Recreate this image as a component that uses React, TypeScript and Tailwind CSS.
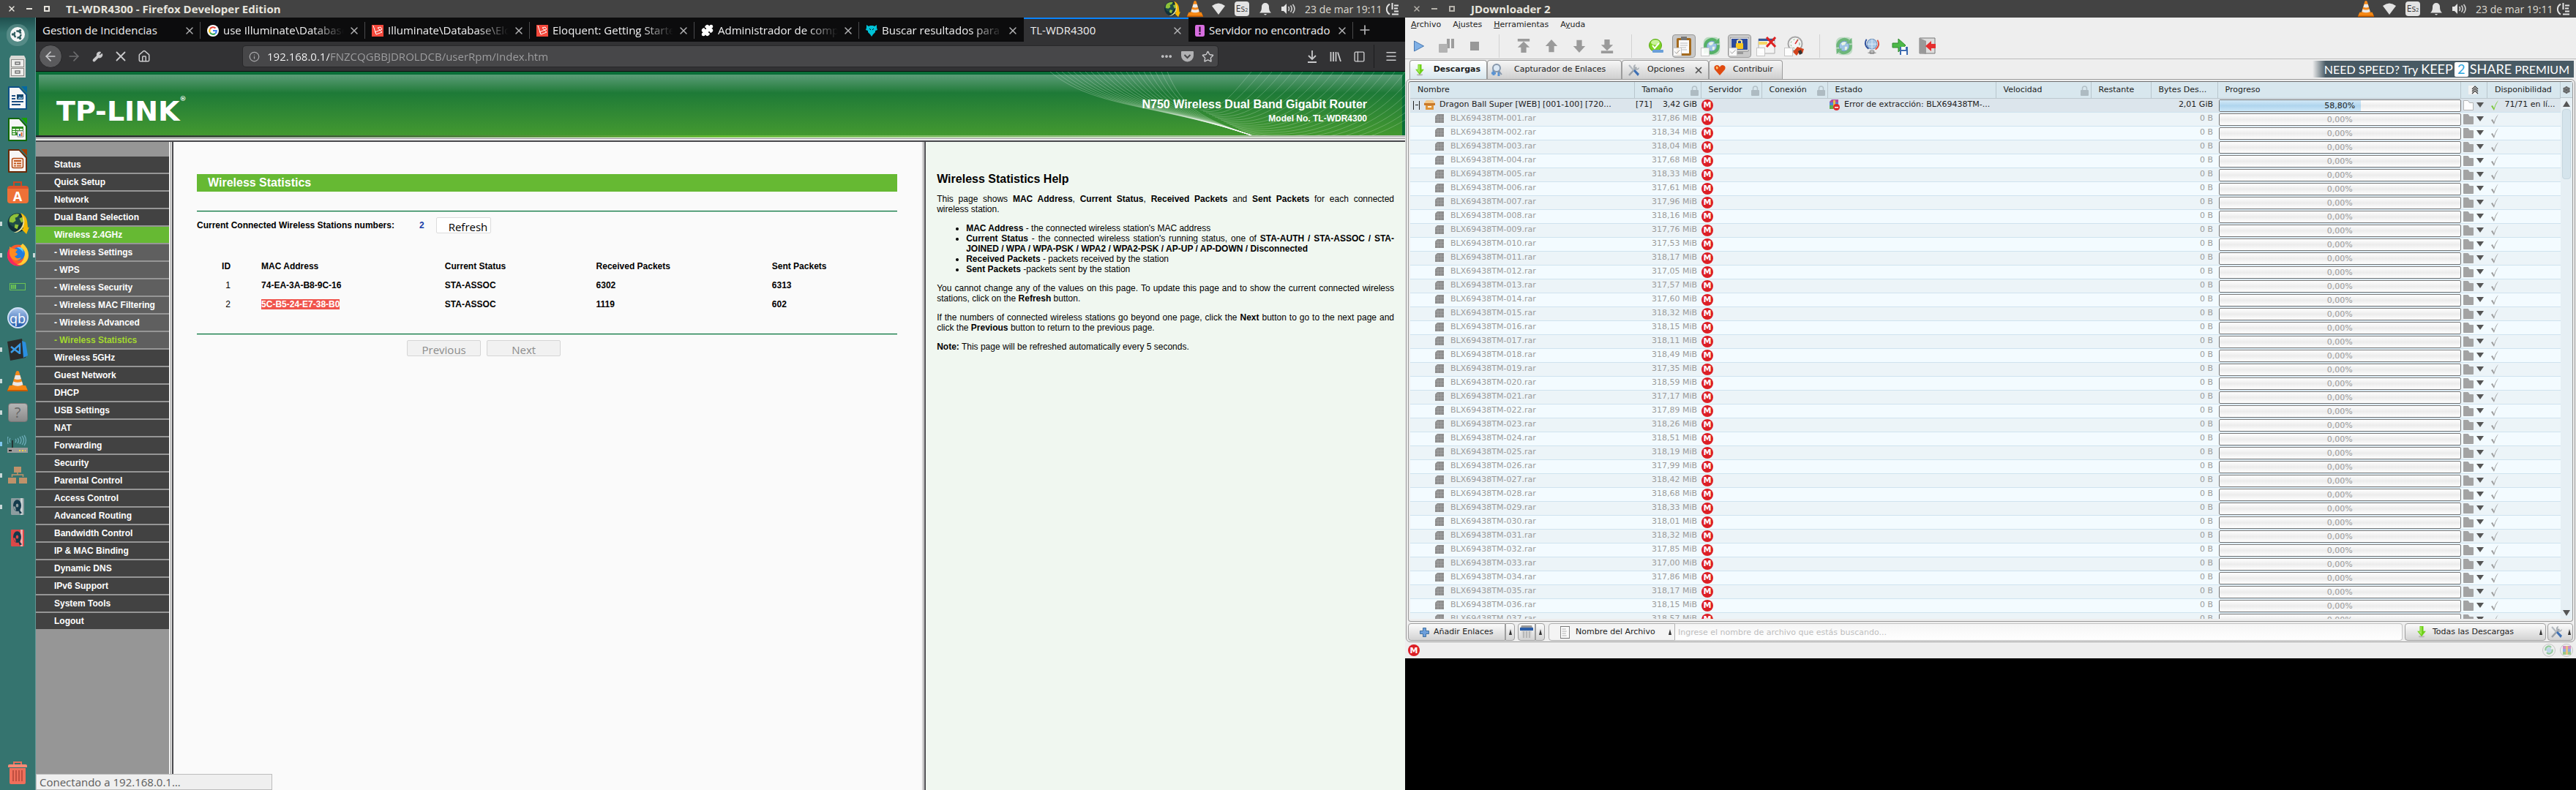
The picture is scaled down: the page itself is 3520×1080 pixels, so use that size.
import type { ReactNode } from 'react';
import {
  ArrowLeft, ArrowRight, Wrench, X, House, Info, Ellipsis, Star, Download, Plus, Menu, Settings, PanelLeft, Puzzle, Check,
} from 'lucide-react';

const UI = 'font-["Open_Sans",sans-serif]';
const ARIAL = 'font-["Liberation_Sans",sans-serif]';
const DEJA = 'font-["DejaVu_Sans",sans-serif]';

/* ---------- shared icons ---------- */

function Vlc({ size }: { size: number }) {
  return (
    <svg width={size} height={size} viewBox="0 0 28 28" aria-hidden="true">
      <path d="M3 20h22l3 7H0z" fill="#f68712" />
      <path d="M0 26h28v2H0z" fill="#c65c00" />
      <path d="M12 1q2-2 4 0l6 20q-8 5-16 0z" fill="#f58a1c" />
      <path d="M11 6h6.400l1.500 5q-4.500 2-9.400 0zM8.200 14.500q5.800 2.500 11.800 0l1.300 4.500q-7 3.500-14.400 0z" fill="#e9e9e9" />
    </svg>
  );
}

function JdLogo({ size }: { size: number }) {
  return (
    <svg width={size} height={size} viewBox="0 0 32 32" aria-hidden="true">
      <circle cx="15" cy="15" r="13.500" fill="#123038" />
      <circle cx="12" cy="12" r="9" fill="#1f4c48" />
      <path d="M6 6q6-5 12-3l-3 4-3 1 1 4-4 3-5-1q-1-4 2-8zM12 17l5 1-2 6-4-2zM18 9l4-2 3 5-4 3z" fill="#8fc23a" />
      <path d="M20 1q8 4 9 12l1 9 2-1-4 10-8-8 3 1q2-12-3-23z" fill="#f5b800" />
      <path d="M22 3q5 8 2 17-4 9-14 9 9-3 12-10 3-8 0-16z" fill="#e8e19c" />
    </svg>
  );
}

function Tray({ jd }: { jd?: boolean }) {
  return (
    <div className="flex items-center pr-2 text-[#dfdbd2]">
      {jd && <span className="flex w-8 justify-center"><JdLogo size={23} /></span>}
      <span className="flex w-8 justify-center"><Vlc size={22} /></span>
      <span className="flex w-8 justify-center">
        <svg width="18" height="16" viewBox="0 0 18 16" aria-hidden="true"><path d="M0 4q9-7 18 0L9 16z" fill="#e3e3e3" /></svg>
      </span>
      <span className="flex w-8 justify-center">
        <span className="flex h-5 w-5 items-center justify-center rounded-sm bg-[#e3e3e3] text-[12px] leading-5 text-[#333]">
          Es<sub className="text-[7px]">2</sub>
        </span>
      </span>
      <span className="flex w-8 justify-center">
        <svg width="16" height="17" viewBox="0 0 16 17" aria-hidden="true">
          <path d="M8 0a5 5 0 0 1 5 5c0 5 1 6.500 3 8.500H0C2 11.500 3 10 3 5a5 5 0 0 1 5-5zM6 15h4q-2 3-4 0z" fill="#e3e3e3" />
        </svg>
      </span>
      <span className="flex w-8 justify-center">
        <svg width="21" height="16" viewBox="0 0 21 16" fill="none" stroke="#cfcfcf" strokeWidth="1.600" aria-hidden="true">
          <path d="M0 5h3l4-4v14l-4-4H0z" fill="#e3e3e3" stroke="none" />
          <path d="M9.500 5q2 3 0 6M12.500 3.500q3.500 4.500 0 9M15.500 2q5 6 0 12" />
        </svg>
      </span>
      <span className="ml-1.5 w-[106px] whitespace-nowrap text-[14px]">23 de mar 19:11</span>
      <svg width="19" height="19" viewBox="0 0 19 19" fill="none" stroke="#e3e3e3" strokeWidth="2" className="ml-1" aria-hidden="true">
        <path d="M6 2.500a8 8 0 0 0 0 14M9.500 1v9M12 4.500h6M12 8.500h5M12 12.500h6M9 16.500h9" />
      </svg>
    </div>
  );
}

function Panel({ title, active, jd }: { title: string; active?: boolean; jd?: boolean }) {
  return (
    <header className={`${UI} flex h-6 shrink-0 items-center justify-between bg-[#434343]`}>
      <div className={active ? 'flex items-center text-[#e6e3dc]' : 'flex items-center text-[#b5b2ab]'}>
        <div className="flex w-[90px] items-center gap-3 pl-2.5">
          <button aria-label="Cerrar" className="flex h-3 w-3 items-center justify-center"><X size={12} strokeWidth={3} /></button>
          <button aria-label="Minimizar" className="flex h-3 w-3 items-center justify-center"><span className="h-0.5 w-2 bg-current" /></button>
          <button aria-label="Maximizar" className="flex h-3 w-3 items-center justify-center"><span className="h-2 w-2 border-2 border-current" /></button>
        </div>
        <h1 className="text-[15px] leading-6 font-bold text-[#e8e5de]">{title}</h1>
      </div>
      <Tray jd={jd} />
    </header>
  );
}

/* ---------- launcher ---------- */

function Doc({ color, dark, children }: { color: string; dark: string; children: ReactNode }) {
  return (
    <svg width="26" height="32" viewBox="0 0 26 32" aria-hidden="true">
      <path d="M0 1q0-1 1-1h14l11 11v20q0 1-1 1H1q-1 0-1-1z" fill={dark} />
      <path d="M2 2h13l9 10v18H2z" fill="#f6f6f6" />
      <path d="M18 0h8v9z" fill={color} />
      {children}
    </svg>
  );
}

function Disk({ color }: { color: string }) {
  return (
    <svg width="18" height="23" viewBox="0 0 18 16" preserveAspectRatio="none" aria-hidden="true">
      <rect width="18" height="16" rx="1" fill={color} />
      <path d="M13 0h3v16h-3z" fill="#fff" opacity=".55" />
      <circle cx="8.500" cy="7" r="5.500" fill="#143a4c" />
      <circle cx="8.500" cy="7" r="1.800" fill={color} />
      <path d="M8 8l7 6-3 1z" fill="#143a4c" />
      <path d="M3 8l3 0 1 4q-3-1-4-4z" fill={color} />
    </svg>
  );
}

const launcher: { name: string; dot?: string; icon: ReactNode }[] = [
  {
    name: 'Inicio',
    icon: (
      <svg width="32" height="32" viewBox="0 0 32 32" aria-hidden="true">
        <rect x="1" y="1" width="30" height="30" rx="14" fill="#6b9b98" opacity=".6" />
        <circle cx="16" cy="15" r="10" fill="#f4f6f6" />
        <circle cx="16" cy="15" r="4.500" fill="none" stroke="#2f5d5f" strokeWidth="2.500" strokeDasharray="7.500 2" />
        <g fill="#2f5d5f"><circle cx="9.500" cy="15" r="1.700" /><circle cx="19.500" cy="9.500" r="1.700" /><circle cx="19.500" cy="20.500" r="1.700" /></g>
      </svg>
    ),
  },
  {
    name: 'Archivos',
    icon: (
      <svg width="22" height="30" viewBox="0 0 22 30" aria-hidden="true">
        <path d="M2 0h18l2 4v26H0V4z" fill="#d9d9d6" />
        <g fill="#eeeeec" stroke="#8b8b88"><rect x="2.500" y="5.500" width="17" height="10" /><rect x="2.500" y="17.500" width="17" height="10" /></g>
        <g fill="none" stroke="#777" strokeWidth="1.500"><path d="M8 9v3h6V9z" /><path d="M8 21v3h6v-3z" /></g>
      </svg>
    ),
  },
  {
    name: 'Writer',
    icon: <Doc color="#0369a3" dark="#0d5087"><path d="M5 12h5v2H5zM5 16h5v2H5zM5 20h16v2H5zM5 24h12v2H5z" fill="#1d4f82" /><path d="M12 11h9v7h-9z" fill="#17486e" /><path d="M13 17l3-3 2 2 2-2v3z" fill="#8fc2e6" /></Doc>,
  },
  {
    name: 'Calc',
    icon: <Doc color="#18a303" dark="#106802"><path d="M5 12h16v12H5z" fill="#2c8a1d" /><path d="M6 15h4v2H6zM11 15h4v2h-4zM16 15h4v2h-4zM6 18h4v2H6zM11 18h4v2h-4zM6 21h4v2H6z" fill="#dff3da" /><path d="M13 18h8v8h-8z" fill="#fff" stroke="#888" /><path d="M15 22h2v3h-2z" fill="#2a76c6" /><path d="M17.500 20h2v5h-2z" fill="#e0662c" /></Doc>,
  },
  {
    name: 'Impress',
    icon: <Doc color="#a33e03" dark="#6b2a06"><rect x="5.500" y="12.500" width="15" height="13" rx="2" fill="#fbe9df" stroke="#b24a13" strokeWidth="1.500" /><path d="M8 15h10v2H8zM8 18.500h3v2H8zM12 18.500h6v2h-6zM8 22h3v1.500H8zM12 22h6v1.500h-6z" fill="#c2571b" /></Doc>,
  },
  {
    name: 'Software de Ubuntu',
    icon: (
      <span className="flex h-[30px] w-[30px] flex-col items-center">
        <span className="h-1.5 w-3 border-2 border-b-0 border-[#cf4622]" />
        <span className="flex h-6 w-[29px] items-center justify-center rounded-sm border-t-4 border-[#d9532b] bg-[#ee7137] text-[18px] leading-none font-bold text-white">A</span>
      </span>
    ),
  },
  { name: 'JDownloader', dot: 'bg-[#c9d8d8]', icon: <JdLogo size={31} /> },
  {
    name: 'Firefox',
    dot: 'bg-[#c9d8d8]',
    icon: (
      <svg width="31" height="31" viewBox="0 0 31 31" aria-hidden="true">
        <circle cx="15.500" cy="16" r="14.500" fill="#ff5a2c" />
        <path d="M30 16A14.500 14.500 0 0 1 8 28q14 2 16-10L19 3l3-3q8 6 8 16z" fill="#ffcf35" />
        <path d="M1 16a14.500 14.500 0 0 0 19 13.800Q6 28 5 12L3 7q-2 4-2 9z" fill="#f5295f" />
        <circle cx="16" cy="14" r="9" fill="#1f7de0" />
        <path d="M4 4q3 3 6 3l5 1-3 4 3 2q-1 3-4 3 2 5 9 2-2 4-8 4-7-2-8-9z" fill="#ff8a1f" />
        <path d="M14 5q5-1 8 2l1 6q-2-5-9-8z" fill="#5fd0ff" />
      </svg>
    ),
  },
  {
    name: 'Monitor de batería',
    icon: (
      <svg width="22" height="10" viewBox="0 0 22 10" aria-hidden="true">
        <rect x=".5" y=".5" width="21" height="9" fill="none" stroke="#6cc254" />
        <path d="M2 2h2v6H2zM4.500 2h2v6h-2zM7 2h2v6H7z" fill="#6cc254" />
      </svg>
    ),
  },
  {
    name: 'qBittorrent',
    icon: <span className="flex h-[29px] w-[29px] items-center justify-center rounded-full border-2 border-[#cfe0f5] bg-linear-to-b from-[#a9c4ea] to-[#1e57a8] text-[18px] leading-none text-white">qb</span>,
  },
  {
    name: 'Visual Studio Code',
    dot: 'bg-[#c9d8d8]',
    icon: (
      <svg width="28" height="30" viewBox="0 0 28 30" aria-hidden="true">
        <path d="M0 4l20-4 5 26-21 4z" fill="#2b2b2b" />
        <path d="M20 3l5 2 3 18-6 3z" fill="#2a8fe0" />
        <path d="M5 11l12 9M5 19L17 8v13" stroke="#3a9be8" strokeWidth="2.500" fill="none" />
      </svg>
    ),
  },
  { name: 'VLC', dot: 'bg-[#c9d8d8]', icon: <Vlc size={28} /> },
  {
    name: 'Desconocido',
    dot: 'bg-[#c9d8d8]',
    icon: <span className="flex h-[26px] w-[27px] items-center justify-center rounded-sm border border-[#777] bg-linear-to-b from-[#b5b5b5] to-[#8a8a8a] text-[20px] leading-none text-[#666]">?</span>,
  },
  {
    name: 'Router',
    dot: 'bg-[#7fc6ee]',
    icon: (
      <svg width="28" height="26" viewBox="0 0 28 26" aria-hidden="true">
        <path d="M0 18h28v7H0z" fill="#9b9b9b" /><path d="M2 21h4v2H2z" fill="#222" /><path d="M16 21h2v2h-2zM20 21h2v2h-2zM24 21h1v2h-1z" fill="#f0dc3c" />
        <path d="M7 8v10" stroke="#222" strokeWidth="1.500" />
        <path d="M4 5q-2 3 0 6M1 3q-2 5 0 10M11 6q2 2 0 5M14 5q3 3 0 7M17 3q4 5 0 10M20 2q5 6 0 12M23 1q5 7 0 14" fill="none" stroke="#6aa9b5" strokeWidth="1.400" />
      </svg>
    ),
  },
  {
    name: 'Red',
    dot: 'bg-[#c9d8d8]',
    icon: (
      <svg width="26" height="24" viewBox="0 0 26 24" fill="#c0926a" aria-hidden="true">
        <path d="M8 0h10v8H8zM0 15h11v8H0zM15 15h11v8H15z" /><path d="M13 8v3M5.500 14v-3h15v3" fill="none" stroke="#c0926a" strokeWidth="1.500" />
      </svg>
    ),
  },
  { name: 'Disco', dot: 'bg-[#c9d8d8]', icon: <Disk color="#8d9da0" /> },
  { name: 'Disco rojo', icon: <Disk color="#dd4848" /> },
];

function Launcher() {
  return (
    <nav aria-label="Lanzador" className={`${UI} flex w-[49px] shrink-0 flex-col border-r border-[#5f9694] bg-[#35746f] bg-linear-to-b from-[#1f4f4e] to-[#35746f] to-2% pt-0.5`}>
      {launcher.map((l) => (
        <button key={l.name} aria-label={l.name} className="flex h-[43px] shrink-0 items-center">
          <span className={`h-1.5 w-[3px] shrink-0 ${l.dot ?? ''}`} />
          <span className="flex flex-1 justify-center">{l.icon}</span>
          <span className={l.name === 'Firefox' ? 'h-1.5 w-[3px] shrink-0 bg-[#c9d8d8]' : 'w-[3px]'} />
        </button>
      ))}
      <button aria-label="Papelera" className="mt-auto flex h-12 items-center justify-center">
        <svg width="26" height="31" viewBox="0 0 26 31" aria-hidden="true">
          <path d="M8 4V1h10v3" fill="none" stroke="#e8705c" strokeWidth="2" /><path d="M0 6q0-2 2-2h22q2 0 2 2v2H0z" fill="#fb8a76" />
          <path d="M2 9h22v20q0 2-2 2H4q-2 0-2-2z" fill="#ef6f5b" /><path d="M7 12v15M11 12v15M15 12v15M19 12v15" stroke="#b14437" strokeWidth="1.500" />
        </svg>
      </button>
    </nav>
  );
}

/* ---------- browser ---------- */

function Laravel() {
  return (
    <svg width="16" height="16" viewBox="0 0 16 16" aria-hidden="true">
      <rect width="16" height="16" fill="#f4493c" />
      <path d="M2 1l4 12 8-3-6-6 4-1 2 3-10 4" fill="none" stroke="#fff" strokeWidth="1" />
    </svg>
  );
}

const tabs: { title: string; icon?: ReactNode; active?: boolean }[] = [
  { title: 'Gestion de Incidencias' },
  {
    title: 'use Illuminate\\Database\\Eloquent',
    icon: (
      <span className="flex h-4 w-4 items-center justify-center rounded-full bg-white">
        <svg width="12" height="12" viewBox="0 0 12 12" fill="none" strokeWidth="2.200" aria-hidden="true">
          <path d="M9.500 2.500A5 5 0 0 0 2 3.500" stroke="#ea4335" /><path d="M2 3.500a5 5 0 0 0 0 5" stroke="#fbbc05" />
          <path d="M2 8.500a5 5 0 0 0 7 1.500" stroke="#34a853" /><path d="M9 10a5 5 0 0 0 1.800-4H6" stroke="#4285f4" />
        </svg>
      </span>
    ),
  },
  { title: 'Illuminate\\Database\\Eloquent', icon: <Laravel /> },
  { title: 'Eloquent: Getting Started', icon: <Laravel /> },
  { title: 'Administrador de complementos', icon: <Puzzle size={17} fill="#fff" stroke="#fff" /> },
  {
    title: 'Buscar resultados para "',
    icon: <svg width="16" height="16" viewBox="0 0 16 16" aria-hidden="true"><path d="M1 0l3 2 2-1h4l2 1 3-2v4l1 3-3 1v2l-3 3-2 3-2-3-3-3V8L0 7l1-3z" fill="#00c2d7" /><path d="M5 5l2 2M11 5L9 7" stroke="#0c0c0d" /></svg>,
  },
  { title: 'TL-WDR4300', active: true },
  {
    title: 'Servidor no encontrado',
    icon: <svg width="13" height="16" viewBox="0 0 13 13" preserveAspectRatio="none" aria-hidden="true"><rect width="13" height="13" rx="2" fill="#d76ee0" /><path d="M5.500 2h2v6h-2zM5.500 9h2v2h-2z" fill="#1b0d1d" /></svg>,
  },
];

function BrowserTabs() {
  return (
    <div role="tablist" className="flex h-[33px] bg-[#0c0c0d] text-[15px] text-[#f0f0f1]">
      {tabs.map((t, i) => (
        <div
          key={i}
          className={t.active ? 'flex w-[225px] min-w-0 border-t-2 border-[#0a84ff] bg-[#323234]' : 'flex w-[225px] min-w-0 border-t-2 border-transparent'}
        >
          <button role="tab" aria-selected={!!t.active} className="flex min-w-0 flex-1 items-center gap-1.5 overflow-hidden pl-[9px] text-left">
            {t.icon && <span className="shrink-0">{t.icon}</span>}
            <span className={t.title.length > 22 ? 'min-w-0 flex-1 overflow-hidden mask-r-from-75% whitespace-nowrap' : 'min-w-0 flex-1 whitespace-nowrap'}>{t.title}</span>
          </button>
          <button aria-label="Cerrar pestaña" className="flex w-7 shrink-0 items-center justify-center text-[#b5b5b7]"><X size={16} /></button>
          <span className={t.active || i === 5 ? 'my-1 w-px' : 'my-1 w-px bg-[#4a4a4c]'} />
        </div>
      ))}
      <button aria-label="Nueva pestaña" className="flex w-8 items-center justify-center text-[#b5b5b7]"><Plus size={20} /></button>
    </div>
  );
}

function Toolbar() {
  return (
    <div className="flex h-[41px] items-center border-b border-[#0c0c0d] bg-[#323234] text-[#c9c9cb]">
      <div className="flex w-[283px] items-center pl-1">
        <button aria-label="Atrás" className="flex h-8 w-8 items-center justify-center rounded-full border border-[#262628] bg-[#5a5a5c]"><ArrowLeft size={20} /></button>
        <button aria-label="Adelante" className="flex h-8 w-8 items-center justify-center text-[#6c6c6e]"><ArrowRight size={20} /></button>
        <button aria-label="Herramientas" className="flex h-8 w-8 items-center justify-center"><Wrench size={15} fill="currentColor" /></button>
        <button aria-label="Detener" className="flex h-8 w-8 items-center justify-center"><X size={22} /></button>
        <button aria-label="Inicio" className="flex h-8 w-8 items-center justify-center"><House size={18} /></button>
      </div>
      <div className="flex h-7 flex-1 items-center rounded-sm bg-[#474749] shadow-[0_0_0_1px_#28282a]">
        <Info size={15} className="mx-2 shrink-0 text-[#a9a9ab]" />
        <input
          aria-label="Dirección"
          defaultValue="192.168.0.1/FNZCQGBBJDROLDCB/userRpm/Index.htm"
          className="ml-0.5 min-w-0 flex-1 bg-linear-[90deg,#f9f9fa_85px,#a0a0a2_85px] bg-clip-text text-[15px] text-transparent outline-none"
        />
        <button aria-label="Acciones" className="flex w-7 justify-center"><Ellipsis size={18} strokeWidth={3} /></button>
        <button aria-label="Pocket" className="flex w-7 justify-center">
          <svg width="17" height="15" viewBox="0 0 17 15" aria-hidden="true"><path d="M1 0h15q1 0 1 1v5a8.500 8.500 0 0 1-17 0V1q0-1 1-1z" fill="#b1b1b3" /><path d="M4.500 5l4 4 4-4" fill="none" stroke="#474749" strokeWidth="2" /></svg>
        </button>
        <button aria-label="Marcador" className="flex w-7 justify-center"><Star size={17} /></button>
      </div>
      <div className="flex w-64 items-center justify-end">
        <button aria-label="Descargas" className="flex w-8 justify-center">
          <svg width="14" height="17" viewBox="0 0 14 17" fill="none" stroke="currentColor" strokeWidth="1.800" aria-hidden="true"><path d="M7 0v12M2 7l5 5 5-5M1 16h12" /></svg>
        </button>
        <button aria-label="Biblioteca" className="flex w-8 justify-center">
          <svg width="16" height="15" viewBox="0 0 16 15" fill="none" stroke="currentColor" strokeWidth="1.800" aria-hidden="true"><path d="M1.500 1v13M5 1v13M8.500 1v13M11 1.500l4 12.500" /></svg>
        </button>
        <button aria-label="Barra lateral" className="flex w-8 justify-center"><PanelLeft size={17} /></button>
        <span className="mx-1 h-8 w-px bg-[#1c1c1e]" />
        <button aria-label="Menú" className="flex w-[38px] justify-center"><Menu size={18} /></button>
      </div>
    </div>
  );
}

const lines = Array.from({ length: 21 }, (_, i) => i);

function Banner() {
  return (
    <div className={`${ARIAL} font-bold text-white`}>
      <div className="relative h-[87px] bg-[#0a6e38] px-1 pt-1">
        <div className="flex h-[83px] items-center justify-between bg-linear-to-b from-[#5a9d78] via-[#1d7a37] via-30% to-[#43992f] pt-4 pr-12 pl-6">
          <div className='flex items-start font-["DejaVu_Sans",sans-serif] text-[38px] leading-10'>
            TP-LINK<sup className="mt-1 text-[9px] leading-none">®</sup>
          </div>
          <div className="text-right">
            <p className="text-[16px] leading-5">N750 Wireless Dual Band Gigabit Router</p>
            <p className="text-[12px] leading-[18px]">Model No. TL-WDR4300</p>
          </div>
        </div>
        <svg className="absolute top-0 right-0" width="485" height="87" viewBox="0 0 485 87" fill="none" stroke="#fff" aria-hidden="true">
          {lines.map((i) => (
            <path key={i} opacity=".26" d={`M${i * 8} 0C${60 + i * 6} 50 ${150 + i * 3} ${45 + i} 275 87`} />
          ))}
          {lines.map((i) => (
            <path key={i} opacity=".22" d={`M${205 + i * 4} ${52 + i * 2}C${230 + i * 8} ${56 + i * 3} ${250 + i * 12} ${30 + i * 3} ${275 + i * 14} 0`} />
          ))}
        </svg>
      </div>
      <div className="h-[3px] bg-linear-to-r from-[#2d2d35] via-[#66b933] via-50% to-[#c4c4c4]" />
      <div className="h-px bg-white" />
      <div className="h-px bg-[#8d8d8d]" />
      <div className="h-0.5 bg-[#f2f2f2]" />
      <div className="h-0.5 bg-[#48484c]" />
    </div>
  );
}

const menu = [
  'Status', 'Quick Setup', 'Network', 'Dual Band Selection', 'Wireless 2.4GHz', '- Wireless Settings', '- WPS', '- Wireless Security',
  '- Wireless MAC Filtering', '- Wireless Advanced', '- Wireless Statistics', 'Wireless 5GHz', 'Guest Network', 'DHCP', 'USB Settings', 'NAT',
  'Forwarding', 'Security', 'Parental Control', 'Access Control', 'Advanced Routing', 'Bandwidth Control', 'IP & MAC Binding', 'Dynamic DNS',
  'IPv6 Support', 'System Tools', 'Logout',
];

function menuClass(m: string) {
  if (m === 'Wireless 2.4GHz') return 'bg-[#66b933] pl-[25px] text-white';
  if (m === '- Wireless Statistics') return 'bg-[#5f5f5f] pl-[25px] text-[#a3d92f]';
  if (m.startsWith('-')) return 'bg-[#5f5f5f] pl-[25px] text-white';
  return 'bg-[#424242] pl-[25px] text-white';
}

function Divider() {
  return (
    <div className="flex w-1.5 shrink-0">
      <span className="w-0.5 bg-[#f2f2f2]" />
      <span className="w-px bg-[#8d8d8d]" />
      <span className="w-px bg-white" />
      <span className="w-0.5 bg-[#48484c]" />
    </div>
  );
}

const stations = [
  ['1', '74-EA-3A-B8-9C-16', 'STA-ASSOC', '6302', '6313'],
  ['2', '5C-B5-24-E7-38-B0', 'STA-ASSOC', '1119', '602'],
];

function Statistics() {
  return (
    <main className="min-w-0 flex-1 bg-[#fafafa] pt-11 pr-[33px] pl-8 text-[12px] font-bold text-black">
      <h2 className="h-6 bg-[#66b933] pl-[15px] text-[16px] leading-6 text-white">Wireless Statistics</h2>
      <hr className="mt-[26px] h-0.5 border-t border-b border-t-[#006b36] border-b-[#b9dcc9]" />
      <div className="mt-[7px] flex h-[22px] items-center">
        <span className="w-[304px]">Current Connected Wireless Stations numbers:</span>
        <span className="w-[23px] text-[#1a3fa8]">2</span>
        <button className={`${UI} h-[22px] w-[75px] rounded-xs border border-[#dcdcdc] bg-white pt-1 pl-3 text-[15px] leading-4 font-normal`}>Refresh</button>
      </div>
      <table className="mt-8 w-full table-fixed text-left">
        <thead>
          <tr className="h-[26px]">
            <th className="w-[9.2%] pr-[42px] text-right">ID</th>
            <th className="w-[26.2%]">MAC Address</th>
            <th className="w-[21.6%]">Current Status</th>
            <th className="w-[25.1%]">Received Packets</th>
            <th>Sent Packets</th>
          </tr>
        </thead>
        <tbody>
          {stations.map((s) => (
            <tr key={s[0]} className="h-[26px]">
              <td className="pr-[42px] text-right font-normal">{s[0]}</td>
              <td><span className={s[0] === '2' ? 'bg-[#f0544c] text-white' : ''}>{s[1]}</span></td>
              <td>{s[2]}</td>
              <td>{s[3]}</td>
              <td>{s[4]}</td>
            </tr>
          ))}
        </tbody>
      </table>
      <hr className="mt-[27px] h-0.5 border-t border-b border-t-[#006b36] border-b-[#b9dcc9]" />
      <div className={`${UI} mt-[7px] ml-[30%] flex gap-2 text-[15px] leading-4 font-normal text-[#8c8c8c]`}>
        <button disabled className="h-[22px] w-[101px] rounded-xs border border-[#d5d5d5] bg-[#f1f1f1] pt-1">Previous</button>
        <button disabled className="h-[22px] w-[101px] rounded-xs border border-[#d5d5d5] bg-[#f1f1f1] pt-1">Next</button>
      </div>
    </main>
  );
}

function Help() {
  return (
    <aside className="w-[35%] bg-[#f0f7f0] pt-[42px] pr-[15px] pl-[15px] text-justify text-[12px] leading-[14px] text-black">
      <h2 className="mb-[11px] text-[16px] leading-[18px] font-bold">Wireless Statistics Help</h2>
      <p className="mb-3">
        This page shows <b>MAC Address</b>, <b>Current Status</b>, <b>Received Packets</b> and <b>Sent Packets</b> for each connected <span className="whitespace-nowrap">wireless station.</span>
      </p>
      <ul className="mb-3 list-disc pl-10">
        <li><b>MAC Address</b> - the connected wireless station's MAC address</li>
        <li><b>Current Status</b> - the connected wireless station's running status, one of <b>STA-AUTH / STA-ASSOC / STA-JOINED / WPA / WPA-PSK / WPA2 / WPA2-PSK / AP-UP / AP-DOWN / Disconnected</b></li>
        <li><b>Received Packets</b> - packets received by the station</li>
        <li><b>Sent Packets</b> -packets sent by the station</li>
      </ul>
      <p className="mb-3">
        You cannot change any of the values on this page. To update this page and to show the current connected wireless stations, click on the <b>Refresh</b> button.
      </p>
      <p className="mb-3">
        If the numbers of connected wireless stations go beyond one page, click the <b>Next</b> button to go to the next page and click the <b>Previous</b> button to return to the previous page.
      </p>
      <p><b>Note:</b> This page will be refreshed automatically every 5 seconds.</p>
    </aside>
  );
}

function Firefox() {
  return (
    <section className="flex min-h-screen min-w-0 flex-col">
      <Panel title="TL-WDR4300 - Firefox Developer Edition" active jd />
      <div className="flex flex-1">
        <Launcher />
        <div className="relative flex min-w-0 flex-1 flex-col">
          <div className={UI}>
            <BrowserTabs />
            <Toolbar />
          </div>
          <Banner />
          <div className={`${ARIAL} flex flex-1`}>
            <nav className="w-[182px] shrink-0 bg-[#969696] pt-5 text-[12px] font-bold">
              <ul>
                {menu.map((m) => (
                  <li key={m} className="mb-0.5"><a href="#" className={`${menuClass(m)} block h-[22px] leading-[22px]`}>{m}</a></li>
                ))}
              </ul>
            </nav>
            <Divider />
            <Statistics />
            <Divider />
            <Help />
          </div>
          <div className={`${UI} absolute bottom-0 left-0 h-[22px] w-[323px] border border-[#bdbdbd] bg-[#efefef] pl-1 text-[15px] leading-5 text-[#5c5c5c]`}>Conectando a 192.168.0.1…</div>
        </div>
      </div>
    </section>
  );
}

/* ---------- download manager ---------- */

function Mega() {
  return <span className="inline-flex h-4 w-4 shrink-0 items-center justify-center rounded-full bg-[#dc1f26] text-[11px] leading-none font-bold text-white">M</span>;
}

function Globe({ ring }: { ring?: string }) {
  return (
    <svg width="26" height="26" viewBox="0 0 28 30" aria-hidden="true">
      <rect x="1" y="1" width="26" height="28" rx="8" fill={ring ?? '#55b167'} opacity=".35" />
      <circle cx="14" cy="15" r="8" fill="#9ec3e6" stroke="#5b86b5" />
      <path d="M9 11q4-4 8-2l-2 4-4 1zM15 16l4 0-1 5-3 0z" fill="#e8f4e4" />
      <g fill="none" stroke={ring ?? '#55b167'} strokeWidth="4.500"><path d="M4 17A10.500 10.500 0 0 1 21 7M24 13A10.500 10.500 0 0 1 7 23" /></g>
      <path d="M17 11l9 0V2zM11 19H2v9z" fill={ring ?? '#55b167'} />
    </svg>
  );
}

function Tick({ on }: { on?: boolean }) {
  return (
    <span className="absolute bottom-0.5 left-1 flex h-3 w-3 items-center justify-center border border-[#c6c6c6] bg-white/90">
      {on && <Check size={10} className="text-[#888]" />}
    </span>
  );
}

function Arrow({ up, bar }: { up?: boolean; bar?: boolean }) {
  return (
    <svg width="20" height="20" viewBox="0 0 20 22" className={up ? '' : 'rotate-180'} fill="#9a9a9a" aria-hidden="true">
      {bar && <path d="M1 0h18v4H1z" />}
      <path d={bar ? 'M10 4l9 9h-5v8H6v-8H1z' : 'M10 1l9 10h-5v9H6v-9H1z'} />
    </svg>
  );
}

function Tool({ label, children, pressed }: { label: string; children: ReactNode; pressed?: boolean }) {
  return (
    <button aria-label={label} aria-pressed={pressed} className="relative flex h-8 w-[38px] items-center justify-center">
      {pressed ? <span className="flex h-8 w-8 items-center justify-center rounded border border-[#999] bg-[#c9c9c9]">{children}</span> : children}
    </button>
  );
}

function Tools() {
  return (
    <svg width="18" height="18" viewBox="0 0 18 18" aria-hidden="true">
      <path d="M3 16L13 5" stroke="#9aa0a6" strokeWidth="2.500" /><path d="M12 1l-1 4 3 2 3-2a4 4 0 1 1-5-4z" fill="#a9afb5" />
      <path d="M3 2l7 8" stroke="#b3b9bf" strokeWidth="2" /><path d="M9 10l2-2 6 6-2 3z" fill="#3d6fb4" />
    </svg>
  );
}

function GreenDown() {
  return (
    <svg width="14" height="16" viewBox="0 0 14 19" aria-hidden="true">
      <ellipse cx="7" cy="17" rx="5" ry="1.500" fill="#bbb" /><path d="M4 0h6v8h4l-7 9-7-9h4z" fill="#6fd11a" /><path d="M5 1h2v13L2 9h3z" fill="#a4ea5c" />
    </svg>
  );
}

function Divide() {
  return <span className="mx-3.5 h-8 w-px bg-[#d2d2d2]" />;
}

function JdToolbar() {
  return (
    <div role="toolbar" className="flex h-9 items-center border-b border-[#bdbdbd]">
      <Tool label="Iniciar"><svg width="14" height="16" viewBox="0 0 14 16" aria-hidden="true"><path d="M.5 1l13 7-13 7z" fill="#7fb0e6" stroke="#4a78b0" /></svg></Tool>
      <Tool label="Pausar"><svg width="22" height="20" viewBox="0 0 22 20" fill="#9d9d9d" aria-hidden="true"><path d="M11 0h4v13h-4zM17 0h4v13h-4z" /><rect y="7" width="12" height="12" rx="1" fill="#b3b3b3" /></svg></Tool>
      <Tool label="Parar"><span className="h-3 w-3 bg-[#989898]" /></Tool>
      <Divide />
      <Tool label="Al principio"><Arrow up bar /></Tool>
      <Tool label="Subir"><Arrow up /></Tool>
      <Tool label="Bajar"><Arrow /></Tool>
      <Tool label="Al final"><Arrow bar /></Tool>
      <Divide />
      <Tool label="Prioridad"><svg width="20" height="20" viewBox="0 0 20 20" aria-hidden="true"><circle cx="9" cy="9" r="8.500" fill="#7ed321" stroke="#5aa81a" /><ellipse cx="9" cy="5" rx="6" ry="3.500" fill="#c9f29a" /><path d="M5 9l3 4 6-7" fill="none" stroke="#fff" strokeWidth="2" /><rect x="5" y="15" width="15" height="4" rx="1" fill="#6a9fd8" /></svg></Tool>
      <Tool label="Portapapeles" pressed>
        <svg width="24" height="26" viewBox="0 0 24 26" aria-hidden="true"><rect x="2" y="2" width="20" height="24" rx="2" fill="#a46a1e" /><path d="M5 5h14v18H5z" fill="#fbfbfb" /><path d="M8 0h8v5H8z" fill="#777" /><path d="M7 9h10M7 12h10M7 15h8M7 18h9" stroke="#bbb" /></svg>
        <Tick on />
      </Tool>
      <Tool label="Reconexión"><Globe /><Tick /></Tool>
      <Tool label="Premium" pressed>
        <svg width="26" height="24" viewBox="0 0 26 24" aria-hidden="true"><rect width="26" height="19" rx="2" fill="#e3e3e3" stroke="#888" /><path d="M2 2h22v15H2z" fill="#2c4a9c" /><path d="M8 20h10v3H8z" fill="#999" /><rect x="8" y="8" width="10" height="8" rx="1" fill="#f7c51e" /><path d="M10 8V5q3-3 6 0v3" fill="none" stroke="#f0e0a0" strokeWidth="2" /></svg>
        <Tick on />
      </Tool>
      <Tool label="Cerrar al terminar">
        <svg width="26" height="26" viewBox="0 0 26 26" aria-hidden="true"><path d="M1 3h22v20H1z" fill="#f4f4f4" stroke="#aaa" /><path d="M1 3h22v3H1z" fill="#34569b" /><path d="M1 7h12v4H1z" fill="#f6d766" /><path d="M12 1l12 13M24 1L12 14" stroke="#dd2222" strokeWidth="3" /></svg>
        <Tick />
      </Tool>
      <Tool label="Límite de velocidad">
        <svg width="26" height="28" viewBox="0 0 26 28" aria-hidden="true"><circle cx="13" cy="11" r="9.500" fill="#f5f5f5" stroke="#a5a5a5" strokeWidth="2" /><path d="M13 11l4-6" stroke="#d33" strokeWidth="1.500" /><circle cx="13" cy="11" r="6" fill="none" stroke="#73b373" strokeDasharray="2 3" /><path d="M10 22l6-7 9 3-2 6-5-1-3 4z" fill="#d3431c" /><path d="M17 21l4-2 2 5-4 2z" fill="#333" /></svg>
        <Tick />
      </Tool>
      <Divide />
      <Tool label="Actualizar"><Globe ring="#6db67a" /></Tool>
      <Tool label="Reconectar"><svg width="24" height="24" viewBox="0 0 26 26" fill="none" aria-hidden="true"><circle cx="13" cy="10" r="7.500" fill="#a9c7e6" stroke="#5b7fae" /><path d="M13 2.500v15M6 10h14" stroke="#e4eef8" /><path d="M5 3q-5 8 3 14" stroke="#2b4e9c" strokeWidth="2" /><path d="M21 4q5 8-3 14" stroke="#e24a3b" strokeWidth="2" /><path d="M7 23h12M10 20h6v4h-6z" stroke="#777" fill="#ccc" /></svg></Tool>
      <Tool label="Exportar"><svg width="22" height="24" viewBox="0 0 22 24" aria-hidden="true"><path d="M1 8h8V2l10 9-10 9v-6H1z" fill="#4db848" stroke="#2e8a2c" /><rect x="11" y="13" width="11" height="11" fill="#3e6cb0" /><path d="M13 13h6v4h-6zM13 19h7v5h-7z" fill="#fff" /></svg></Tool>
      <Tool label="Salir"><svg width="24" height="24" viewBox="0 0 24 24" aria-hidden="true"><path d="M1 1h21v21H1z" fill="#ddd" stroke="#777" /><path d="M1 1l9 4v18l-9-2z" fill="#999" /><path d="M9 12l8-7v4h6v6h-6v4z" fill="#e52f2f" /></svg></Tool>
    </div>
  );
}

function JdTabs() {
  const tab = 'flex h-[26px] items-center rounded-t border border-b-0 border-[#9c9c9c] whitespace-nowrap bg-linear-to-b from-[#f6f6f6] to-[#cfcfcf]';
  return (
    <div className="flex h-[27px] items-end justify-between pr-[3px] pl-1.5">
      <div role="tablist" className="flex items-end">
        <button role="tab" aria-selected className="flex h-[26px] w-[106px] items-center justify-between rounded-t border border-b-0 border-[#9c9c9c] bg-linear-to-b from-white to-[#d8e7ee] pr-2 pl-1.5 font-bold"><GreenDown />Descargas</button>
        <button role="tab" aria-selected={false} className={`${tab} w-[184px] gap-4 pl-1`}>
          <svg width="16" height="18" viewBox="0 0 16 18" aria-hidden="true"><path d="M4 8v8M1 13h6M11 10v7" stroke="#5a93d2" strokeWidth="3" /><circle cx="8" cy="6" r="5" fill="#dce9f6" stroke="#8697ab" strokeWidth="2" /><path d="M11 10l4 5" stroke="#8697ab" strokeWidth="2" /></svg>
          Capturador de Enlaces
        </button>
        <div className={`${tab} w-[119px] px-1.5`}>
          <button role="tab" aria-selected={false} className="flex flex-1 items-center gap-2.5"><Tools />Opciones</button>
          <button aria-label="Cerrar Opciones"><X size={14} strokeWidth={3} className="text-[#555]" /></button>
        </div>
        <button role="tab" aria-selected={false} className={`${tab} w-[101px] gap-2.5 pl-1.5`}>
          <svg width="16" height="16" viewBox="0 0 16 16" aria-hidden="true"><path d="M8 15L1 7q-2-5 3-6 3 0 4 3 1-3 4-3 5 1 3 6z" fill="#e04a10" /><path d="M3 3q2-1 3 2l-2 2q-2-2-1-4z" fill="#ffc46b" /></svg>
          Contribuir
        </button>
      </div>
      <a href="#" className='mb-0.5 flex h-[23px] w-[357px] items-center justify-end gap-1 bg-linear-to-r from-transparent to-[#485a64] to-5% pr-1.5 font-["Lato",sans-serif] text-[16px] whitespace-nowrap text-white'>
        <span>NEED SPEED? Try</span>
        <span className="flex items-center text-[18px]">KEEP<span className="mx-0.5 flex h-5 w-[19px] items-center justify-center rounded-xs bg-white text-[#2aa5de]">2</span>SHARE</span>
        <span>PREMIUM</span>
      </a>
    </div>
  );
}

const sizes = [
  '317,86', '318,34', '318,04', '317,68', '318,33', '317,61', '317,96', '318,16', '317,76', '317,53', '318,17', '317,05', '317,57', '317,60',
  '318,32', '318,15', '318,11', '318,49', '317,35', '318,59', '317,17', '317,89', '318,26', '318,51', '318,19', '317,99', '318,42', '318,68',
  '318,33', '318,01', '318,32', '317,85', '317,00', '317,86', '318,17', '318,15', '318,57',
];

function Progress({ value, label }: { value: number; label: string }) {
  return (
    <div role="progressbar" aria-valuenow={value} className="ml-0.5 mt-px h-[17px] rounded-xs border border-[#777] bg-linear-to-b from-white via-[#ececec] to-white">
      <div className="h-full bg-linear-to-b from-[#d3e9f7] via-[#b0d5ee] to-[#cbe7f8]" style={{ width: `${value}%` }} />
      <div className="-mt-[15px] text-center leading-[16px]">{label}</div>
    </div>
  );
}

function FolderCell({ on }: { on?: boolean }) {
  return (
    <button aria-label="Prioridad" className="flex w-full items-center gap-1 pl-[3px]">
      <svg width="14" height="14" viewBox="0 0 14 14" aria-hidden="true"><path d="M.5.500h6l2 3h5v10H.5z" fill={on ? '#fdfdfd' : '#a3a3a3'} stroke={on ? '#b5b5b5' : '#a3a3a3'} /></svg>
      <svg width="10" height="7" viewBox="0 0 10 7" aria-hidden="true"><path d="M0 0h10L5 7z" fill="#555" /></svg>
    </button>
  );
}

function CheckMark({ color }: { color: string }) {
  return <svg width="12" height="14" viewBox="0 0 12 14" className="shrink-0" aria-hidden="true"><path d="M1 8l2-1 2 4Q7 4 11 0 7 6 5 14z" fill={color} /></svg>;
}

function Lock() {
  return (
    <svg width="11" height="14" viewBox="0 0 11 14" className="mt-0.5 mr-[3px] shrink-0" aria-hidden="true">
      <path d="M2.500 7V4a3 3 0 0 1 6 0v3" fill="none" stroke="#b3c0c7" strokeWidth="1.500" /><rect y="6" width="11" height="8" rx="1" fill="#aebbc2" />
    </svg>
  );
}

const columns: { label: string; cls: string; lock?: boolean }[] = [
  { label: 'Nombre', cls: 'w-[306px]' },
  { label: 'Tamaño', cls: 'w-[91px]', lock: true },
  { label: 'Servidor', cls: 'w-[83px]', lock: true },
  { label: 'Conexión', cls: 'w-[90px]', lock: true },
  { label: 'Estado', cls: 'w-[230px]' },
  { label: 'Velocidad', cls: 'w-[130px]', lock: true },
  { label: 'Restante', cls: 'w-[82px]' },
  { label: 'Bytes Des...', cls: 'w-[91px]' },
  { label: 'Progreso', cls: '' },
  { label: '', cls: 'w-9' },
  { label: 'Disponibilidad', cls: 'w-[100px]' },
];

function RarIcon() {
  return <svg width="14" height="13" viewBox="0 0 14 13" className="shrink-0" aria-hidden="true"><path d="M1 3l3-3h9v12H1z" fill="#8c8c8c" /><path d="M1 4h12M1 8h12M5 1v11M9 1v11" stroke="#aaa" strokeWidth=".7" /></svg>;
}

function Downloads() {
  return (
    <div className="flex min-h-0 flex-1 rounded border border-[#9a9a9a] border-t-[#6f6f6f] pb-[3px] pl-0.5">
      <div className="h-full min-w-0 flex-1 overflow-hidden">
        <table className="w-full table-fixed border-collapse text-left">
          <thead>
            <tr className="h-[22px] bg-[#d8e7ee]">
              {columns.map((c) => (
                <th key={c.label} className={`${c.cls} border-r border-b border-r-[#b9c6cd] border-b-[#bcc8ce] p-0 font-normal`}>
                  <div className="flex items-center justify-between pl-[10px] whitespace-nowrap">
                    {c.label || (
                      <svg width="14" height="14" viewBox="0 0 14 14" aria-hidden="true"><path d="M0 1h8l4 4v8H0z" fill="#f3f3f3" /><path d="M5 6l4-4 4 4M5 9l4-4 4 4M5 12l4-4 4 4" fill="none" stroke="#333" strokeWidth="1.200" /></svg>
                    )}
                    {c.lock && <Lock />}
                  </div>
                </th>
              ))}
            </tr>
          </thead>
          <tbody>
            <tr className="h-[19px] border-b border-[#cfe3ef] bg-[#dce5ec]">
              <td className="p-0">
                <div className="flex h-[18px] items-center whitespace-nowrap">
                  <button aria-label="Contraer" className="mr-1.5 ml-1 flex h-3 w-[9px] items-center justify-center border-x border-[#222]"><span className="h-px w-1 bg-[#222]" /></button>
                  <svg width="15" height="14" viewBox="0 0 15 14" aria-hidden="true"><path d="M3 0h9l3 4H0z" fill="#f2c98c" /><path d="M2 4h11v9H2z" fill="#e0953a" /><path d="M0 4h15v3H0z" fill="#c9792a" /><path d="M5 8h5v2H5z" fill="#fff2da" /></svg>
                  <span className="ml-1.5">Dragon Ball Super [WEB] [001-100] [720...</span>
                </div>
              </td>
              <td className="py-0 pr-[5px] pl-0.5"><div className="flex justify-between whitespace-nowrap"><span>[71]</span><span>3,42 GiB</span></div></td>
              <td className="p-0"><div className="flex pl-px"><Mega /></div></td>
              <td />
              <td className="p-0">
                <div className="flex items-center gap-1.5 pl-0.5 whitespace-nowrap">
                  <svg width="15" height="15" viewBox="0 0 15 15" className="shrink-0" aria-hidden="true"><path d="M1 3l3-3h9v4H1z" fill="#b04ba0" /><path d="M1 4h12v4H1z" fill="#4f86d8" /><path d="M1 8h12v5H1z" fill="#5fae4c" /><path d="M6 1h3v12H6z" fill="#e8c24a" /><circle cx="10.500" cy="10.500" r="4.500" fill="#dc2a2a" /><path d="M8 10h5v1.500H8z" fill="#fff" /></svg>
                  Error de extracción: BLX69438TM-...
                </div>
              </td>
              <td /><td />
              <td className="py-0 pr-1.5 pl-0 text-right">2,01 GiB</td>
              <td className="p-0"><Progress value={58.8} label="58,80%" /></td>
              <td className="p-0"><FolderCell on /></td>
              <td className="p-0"><div className="flex items-center gap-2 pl-1 whitespace-nowrap"><CheckMark color="#7cc83c" />71/71 en lí...</div></td>
            </tr>
            {sizes.map((s, i) => (
              <tr key={i} className="h-[19px] border-b border-[#cfe3ef] text-[#9b9b9b] odd:bg-[#f3fbff] even:bg-[#ecf4f8]">
                <td className="p-0"><div className="flex h-[18px] items-center gap-2 pl-[33px]"><RarIcon />BLX69438TM-{String(i + 1).padStart(3, '0')}.rar</div></td>
                <td className="py-0 pr-[5px] pl-0 text-right">{s} MiB</td>
                <td className="p-0"><div className="flex pl-px"><Mega /></div></td>
                <td /><td /><td /><td />
                <td className="py-0 pr-1.5 pl-0 text-right">0 B</td>
                <td className="p-0"><Progress value={0} label="0,00%" /></td>
                <td className="p-0"><FolderCell /></td>
                <td className="p-0"><div className="flex pl-1"><CheckMark color="#9b9b9b" /></div></td>
              </tr>
            ))}
          </tbody>
        </table>
      </div>
      <div className="flex w-4 shrink-0 flex-col items-center bg-[#e6eff4]">
        <button aria-label="Columnas" className="flex h-[22px] w-full items-center justify-center border-b border-[#bcc8ce] bg-[#d8e7ee]"><Settings size={10} strokeWidth={4} className="text-[#555]" /></button>
        <svg width="10" height="8" viewBox="0 0 10 8" className="mt-1" aria-hidden="true"><path d="M5 0l5 8H0z" fill="#555" /></svg>
        <div className="mt-[3px] h-24 w-3 rounded-sm border border-[#c5d6df] bg-[#d5e4ec]" />
        <svg width="10" height="8" viewBox="0 0 10 8" className="mt-auto mb-1" aria-hidden="true"><path d="M0 0h10L5 8z" fill="#555" /></svg>
      </div>
    </div>
  );
}

function Up() {
  return <svg width="4" height="8" viewBox="0 0 4 8" aria-hidden="true"><path d="M2 0l2 8H0z" fill="#333" /></svg>;
}

function BottomBar() {
  const btn = 'flex h-6 items-center border border-[#9f9f9f] bg-linear-to-b from-[#fbfbfb] to-[#d3d3d3] whitespace-nowrap';
  return (
    <div className="mt-0.5 flex items-center">
      <button className={`${btn} w-[133px] gap-1.5 rounded-l pl-[15px]`}>
        <svg width="13" height="13" viewBox="0 0 13 13" aria-hidden="true"><path d="M4.500.500h4v4h4v4h-4v4h-4v-4h-4v-4h4z" fill="#6d9fdc" stroke="#41719f" /></svg>
        Añadir Enlaces
      </button>
      <button aria-label="Más opciones" className={`${btn} mr-1 w-[13px] justify-center rounded-r`}><Up /></button>
      <button aria-label="Limpiar" className={`${btn} w-6 justify-center rounded-l`}>
        <svg width="18" height="18" viewBox="0 0 18 18" aria-hidden="true"><path d="M2 0h14l1 3H1z" fill="#999" /><path d="M0 3h18v4H0z" fill="#2c5ea8" /><path d="M2 7h14l-1 11H3z" fill="#d5d5d5" /><path d="M5 8v9M9 8v9M13 8v9" stroke="#999" /></svg>
      </button>
      <button aria-label="Más limpieza" className={`${btn} mr-[5px] w-[13px] justify-center rounded-r`}><Up /></button>
      <button className="flex h-6 w-[173px] items-center rounded-l border border-[#b0b0b0] bg-[#f4f4f4] pr-1 pl-[15px] whitespace-nowrap">
        <svg width="13" height="17" viewBox="0 0 15 17" preserveAspectRatio="none" className="mr-2" aria-hidden="true"><rect x=".5" y=".5" width="14" height="16" fill="#fafafa" stroke="#777" /><path d="M3 4h6M3 7h7M3 10h6M3 13h7" stroke="#aaa" /></svg>
        <span className="flex-1 text-left">Nombre del Archivo</span><Up />
      </button>
      <input aria-label="Buscar archivo" placeholder="Ingrese el nombre de archivo que estás buscando..." className="h-6 min-w-0 flex-1 rounded-r border border-l-0 border-[#c4c4c4] bg-linear-to-b from-[#f5f5f5] to-white pl-1 placeholder:text-[#bdbdbd]" />
      <button className={`${btn} ml-[3px] w-[193px] gap-2 rounded pr-1 pl-[15px]`}><GreenDown /><span className="flex-1 text-left">Todas las Descargas</span><Up /></button>
      <button aria-label="Ajustes rápidos" className={`${btn} ml-0.5 w-[35px] justify-between rounded px-0.5`}><Tools /><Up /></button>
    </div>
  );
}

function JDownloader() {
  return (
    <section className="flex h-screen min-w-0 flex-col bg-black">
      <Panel title="JDownloader 2" />
      <div className={`${DEJA} flex min-h-0 flex-1 flex-col bg-[#eeeeee] text-[11px] text-[#1c1c1c]`}>
        <nav className="flex h-[21px] items-center gap-4 pl-2">
          <button><u>A</u>rchivo</button>
          <button>A<u>j</u>ustes</button>
          <button><u>H</u>erramientas</button>
          <button>A<u>y</u>uda</button>
        </nav>
        <JdToolbar />
        <JdTabs />
        <div className="mr-px ml-px flex min-h-0 flex-1 flex-col rounded-md border border-[#9a9a9a] p-0.5 pb-px">
          <Downloads />
          <BottomBar />
        </div>
        <footer className="flex h-[22px] shrink-0 items-center justify-between px-1">
          <Mega />
          <div className="flex gap-1.5 opacity-60">
            <span className="flex h-[18px] w-[18px] items-center justify-center rounded-full border border-[#aaa]"><svg width="12" height="14" viewBox="0 0 28 32" aria-hidden="true"><circle cx="14" cy="15" r="8" fill="#9ec3e6" /><path d="M4 17A10 10 0 0 1 21 7M24 13A10 10 0 0 1 7 23" fill="none" stroke="#55b167" strokeWidth="5" /></svg></span>
            <span className="flex h-[18px] w-[18px] items-center justify-center rounded-full border border-[#aaa]"><svg width="11" height="12" viewBox="0 0 11 12" aria-hidden="true"><path d="M0 0h11v4H0z" fill="#c04ba8" /><path d="M0 4h11v4H0z" fill="#4f86d8" /><path d="M0 8h11v4H0z" fill="#5fae4c" /><path d="M4 0h3v12H4z" fill="#e8a23a" /></svg></span>
          </div>
        </footer>
      </div>
      <div className="h-1/6 shrink-0 bg-black" />
    </section>
  );
}

export default function App() {
  return (
    <div className="grid min-h-screen grid-cols-[6fr_5fr]">
      <Firefox />
      <JDownloader />
    </div>
  );
}
